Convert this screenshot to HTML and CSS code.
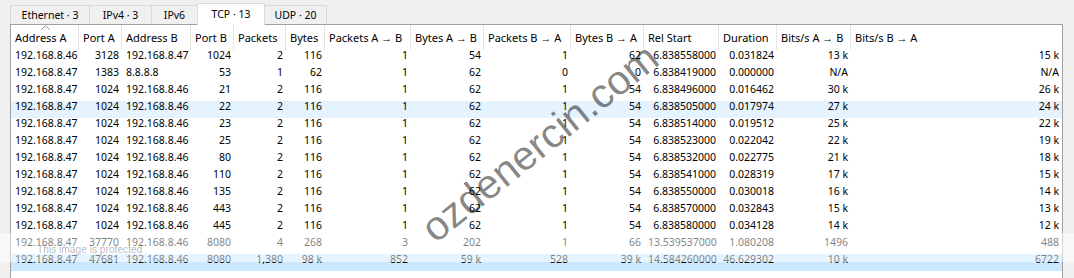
FILE: index.html
```html
<!DOCTYPE html>
<html lang="en">

<head>
    <meta charset="UTF-8">
    <title>Conversations</title>
    <link rel="stylesheet" href="styles.css">
</head>

<body>
    <div class="tabs">
        <div class="tab tab-eth">Ethernet · 3</div>
        <div class="tab tab-ipv4">IPv4 · 3</div>
        <div class="tab tab-ipv6">IPv6</div>
        <div class="tab tab-tcp active">TCP · 13</div>
        <div class="tab tab-udp">UDP · 20</div>
    </div>

    <div class="panel">
        <table class="conv">
            <colgroup>
                <col style="width: 68px">
                <col style="width: 43px">
                <col style="width: 69px">
                <col style="width: 43px">
                <col style="width: 52px">
                <col style="width: 39px">
                <col style="width: 86px">
                <col style="width: 73px">
                <col style="width: 87px">
                <col style="width: 73px">
                <col style="width: 75px">
                <col style="width: 58px">
                <col style="width: 74px">
                <col style="width: 211px">
            </colgroup>
            <thead>
                <tr>
                    <th class="sorted">Address A
                        <svg class="sort-arrow" width="9" height="5" viewBox="0 0 9 5">
                            <path d="M0.5 4.5 L4.5 0.8 L8.5 4.5" fill="none" stroke="#8a8a8a" stroke-width="1"/>
                        </svg>
                    </th>
                    <th>Port A</th>
                    <th>Address B</th>
                    <th>Port B</th>
                    <th>Packets</th>
                    <th>Bytes</th>
                    <th>Packets A → B</th>
                    <th>Bytes A → B</th>
                    <th>Packets B → A</th>
                    <th>Bytes B → A</th>
                    <th>Rel Start</th>
                    <th>Duration</th>
                    <th>Bits/s A → B</th>
                    <th class="last">Bits/s B → A</th>
                </tr>
            </thead>
            <tbody id="rows"></tbody>
        </table>
    </div>

    <!-- overlays baked into the original screenshot -->
    <div class="protect"><span>This image is protected</span></div>
    <div class="watermark">ozdenercin.com</div>

    <script>
        var rows = [
            ['192.168.8.46', '3128', '192.168.8.47', '1024', '2', '116', '1', '54', '1', '62', '6.838558000', '0.031824', '13 k', '15 k'],
            ['192.168.8.47', '1383', '8.8.8.8', '53', '1', '62', '1', '62', '0', '0', '6.838419000', '0.000000', 'N/A', 'N/A'],
            ['192.168.8.47', '1024', '192.168.8.46', '21', '2', '116', '1', '62', '1', '54', '6.838496000', '0.016462', '30 k', '26 k'],
            ['192.168.8.47', '1024', '192.168.8.46', '22', '2', '116', '1', '62', '1', '54', '6.838505000', '0.017974', '27 k', '24 k'],
            ['192.168.8.47', '1024', '192.168.8.46', '23', '2', '116', '1', '62', '1', '54', '6.838514000', '0.019512', '25 k', '22 k'],
            ['192.168.8.47', '1024', '192.168.8.46', '25', '2', '116', '1', '62', '1', '54', '6.838523000', '0.022042', '22 k', '19 k'],
            ['192.168.8.47', '1024', '192.168.8.46', '80', '2', '116', '1', '62', '1', '54', '6.838532000', '0.022775', '21 k', '18 k'],
            ['192.168.8.47', '1024', '192.168.8.46', '110', '2', '116', '1', '62', '1', '54', '6.838541000', '0.028319', '17 k', '15 k'],
            ['192.168.8.47', '1024', '192.168.8.46', '135', '2', '116', '1', '62', '1', '54', '6.838550000', '0.030018', '16 k', '14 k'],
            ['192.168.8.47', '1024', '192.168.8.46', '443', '2', '116', '1', '62', '1', '54', '6.838570000', '0.032843', '15 k', '13 k'],
            ['192.168.8.47', '1024', '192.168.8.46', '445', '2', '116', '1', '62', '1', '54', '6.838580000', '0.034128', '14 k', '12 k'],
            ['192.168.8.47', '37770', '192.168.8.46', '8080', '4', '268', '3', '202', '1', '66', '13.539537000', '1.080208', '1496', '488'],
            ['192.168.8.47', '47681', '192.168.8.46', '8080', '1,380', '98 k', '852', '59 k', '528', '39 k', '14.584260000', '46.629302', '10 k', '6722']
        ];

        // address columns are left aligned, everything else right aligned
        var leftCols = [0, 2];
        var body = document.getElementById('rows');

        rows.forEach(function (row, i) {
            var tr = document.createElement('tr');
            if (i === 3) tr.className = 'hover';
            if (i === rows.length - 1) tr.className = 'selected';
            row.forEach(function (value, c) {
                var td = document.createElement('td');
                if (leftCols.indexOf(c) !== -1) td.className = 'l';
                td.textContent = value;
                tr.appendChild(td);
            });
            body.appendChild(tr);
        });
    </script>
</body>

</html>
```

FILE: styles.css
```css
html,
body {
    margin: 0;
    height: 278px;
    overflow: hidden;
}

body {
    font-family: "Noto Sans", "Open Sans", sans-serif;
    font-size: 10.5px;
    color: #000;
    background-color: #f0f0f0;
    position: relative;
}

.tabs {
    display: flex;
    align-items: flex-end;
    height: 24px;
    padding-left: 10px;
}

.tab {
    box-sizing: border-box;
    height: 19px;
    display: flex;
    align-items: center;
    justify-content: center;
    background-color: #f0f0f0;
    border: 1px solid #d9d9d9;
    border-bottom: none;
    margin-right: -1px;
    white-space: nowrap;
}

.tab-eth { width: 80px; }
.tab-ipv4 { width: 63px; }
.tab-ipv6 { width: 47px; }
.tab-tcp { width: 68px; }
.tab-udp { width: 63px; }

.tab.active {
    height: 22px;
    margin-bottom: -1px;
    background-color: #fff;
    position: relative;
    z-index: 1;
    padding-bottom: 1px;
}

.panel {
    margin-left: 10px;
    width: 1051px;
    height: 260px;
    background-color: #fff;
    border: 1px solid #a0a0a0;
    border-bottom: none;
}

.conv {
    table-layout: fixed;
    width: 1051px;
    border-collapse: separate;
    border-spacing: 0;
}

.conv th {
    box-sizing: border-box;
    height: 25px;
    padding: 0 0 0 4px;
    text-align: left;
    font-size: 11px;
    font-weight: normal;
    border-right: 1px solid #e5e5e5;
    white-space: nowrap;
    vertical-align: middle;
}

.conv th.last {
    border-right: none;
}

.conv th.sorted {
    position: relative;
}

.sort-arrow {
    position: absolute;
    left: 30px;
    top: 0;
}

.conv td {
    box-sizing: border-box;
    height: 17px;
    padding: 0 3px 0 4px;
    line-height: 11px;
    vertical-align: top;
    text-align: right;
    white-space: nowrap;
}

.conv td.l {
    text-align: left;
}

.conv tr.hover td {
    background-color: #e5f3ff;
}

.conv tr.selected td {
    background-color: #cce8ff;
}

.protect {
    position: absolute;
    left: 0;
    top: 233px;
    width: 1074px;
    height: 29px;
    background-color: rgba(255, 255, 255, 0.5);
}

.protect span {
    position: absolute;
    left: 37px;
    top: 11px;
    font-family: "Liberation Sans", sans-serif;
    font-size: 10.2px;
    color: rgba(0, 0, 0, 0.3);
}

.watermark {
    position: absolute;
    left: 540px;
    top: 143px;
    transform: translate(-50%, -50%) rotate(-38.7deg);
    font-family: "Liberation Sans", Arial, sans-serif;
    font-size: 41px;
    line-height: 1;
    color: rgba(0, 0, 0, 0.47);
    white-space: nowrap;
    pointer-events: none;
}
```
